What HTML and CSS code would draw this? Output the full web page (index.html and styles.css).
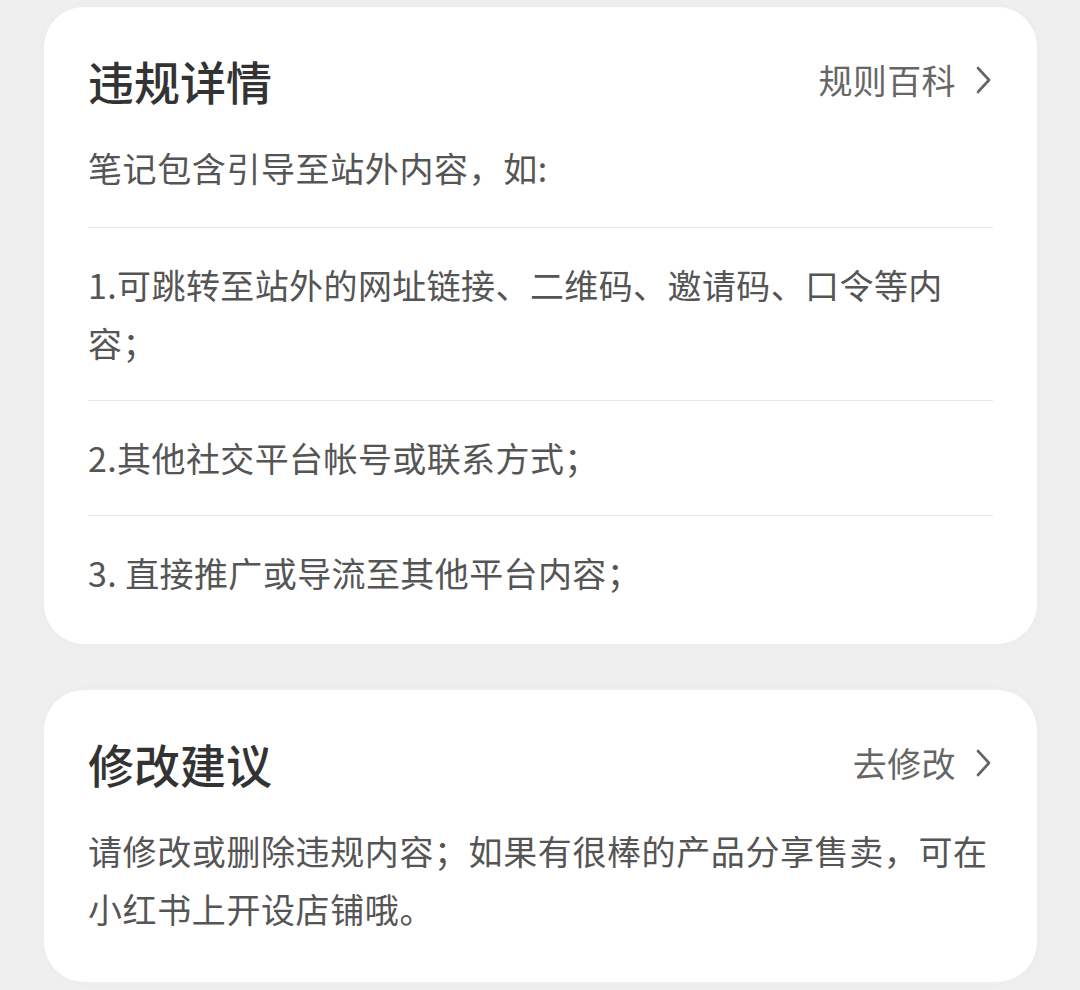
FILE: index.html
```html
<!DOCTYPE html>
<html lang="zh-CN">
<head>
  <meta charset="UTF-8">
  <meta name="viewport" content="width=device-width, initial-scale=1.0">
  <title>违规详情</title>
  <link rel="stylesheet" href="styles.css">
</head>
<body>
  <div class="card">
    <div class="card-head">
      <h2 class="card-title">违规详情</h2>
      <a href="#" class="card-link">规则百科
        <svg class="chevron" width="16" height="28" viewBox="0 0 16 28"><polyline points="2,2 13,14 2,26" fill="none" stroke="#666" stroke-width="2.6" stroke-linecap="round" stroke-linejoin="round"/></svg>
      </a>
    </div>
    <p class="card-text intro">笔记包含引导至站外内容，如:</p>

    <ul class="rules">
      <li>1.可跳转至站外的网址链接、二维码、邀请码、口令等内容；</li>
      <li>2.其他社交平台帐号或联系方式；</li>
      <li>3. 直接推广或导流至其他平台内容；</li>
    </ul>
  </div>

  <div class="card card-last">
    <div class="card-head">
      <h2 class="card-title">修改建议</h2>
      <a href="#" class="card-link">去修改
        <svg class="chevron" width="16" height="28" viewBox="0 0 16 28"><polyline points="2,2 13,14 2,26" fill="none" stroke="#666" stroke-width="2.6" stroke-linecap="round" stroke-linejoin="round"/></svg>
      </a>
    </div>
    <p class="card-text">请修改或删除违规内容；如果有很棒的产品分享售卖，可在小红书上开设店铺哦。</p>
  </div>
</body>
</html>
```

FILE: styles.css
```css
body {
  margin: 0;
  padding: 7px 43px 10px 44px;
  background-color: #efefef;
  font-family: "Noto Sans CJK SC", "Noto Sans", sans-serif;
  color: #555;
}

.card {
  background-color: #fff;
  border-radius: 40px;
  padding: 43px 44px 42px;
  margin-bottom: 46px;
  box-shadow: 0 0 14px rgba(0, 0, 0, 0.025);
}

.card-last {
  padding-bottom: 44px;
}

.card-head {
  display: flex;
  justify-content: space-between;
  align-items: center;
  height: 60px;
}

.card-title {
  margin: 0;
  font-size: 46px;
  font-weight: 500;
  line-height: 60px;
  color: #333;
}

.card-link {
  display: flex;
  align-items: center;
  gap: 20px;
  font-size: 34px;
  line-height: 60px;
  letter-spacing: 0.4px;
  color: #666;
  text-decoration: none;
}

.chevron {
  display: block;
  margin-right: 1px;
}

.card-text {
  margin: 29px 0 0;
  font-size: 34px;
  line-height: 58px;
  letter-spacing: 0.6px;
  color: #555;
}

.intro {
  margin-bottom: 30px;
}

.rules {
  list-style: none;
  margin: 0;
  padding: 0;
  font-size: 34px;
  line-height: 58px;
  letter-spacing: 0.4px;
}

.rules li {
  border-top: 1px solid #e6e6e6;
  padding: 28px 0;
}

.rules li:last-child {
  padding-bottom: 0;
}
```
